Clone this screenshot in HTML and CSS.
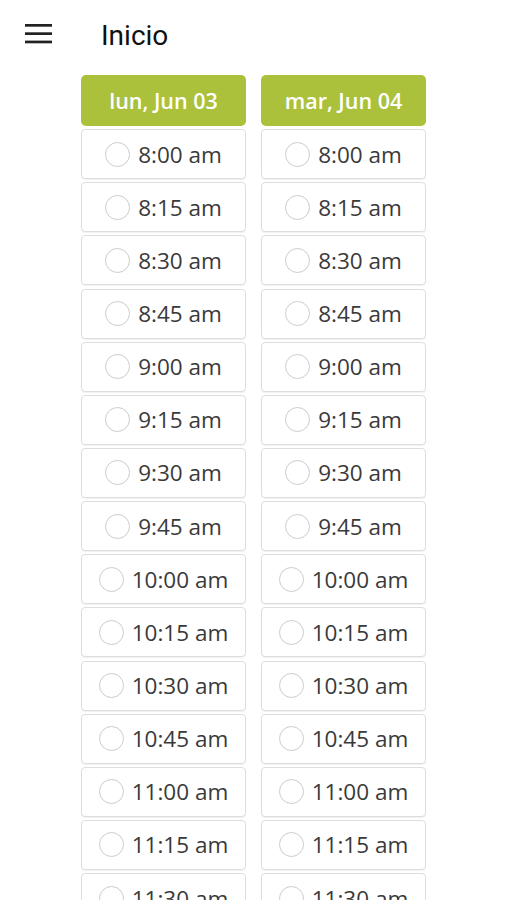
FILE: index.html
```html
<!DOCTYPE html>
<html lang="es">
<head>
    <meta charset="UTF-8">
    <meta name="viewport" content="width=device-width, initial-scale=1.0">
    <title>Inicio</title>
    <link rel="stylesheet" href="styles.css">
</head>
<body>
    <div class="toolbar">
        <svg class="menu-icon" width="27" height="20" viewBox="0 0 27 20">
            <rect x="0" y="0" width="27" height="2.7" fill="#222"/>
            <rect x="0" y="8.3" width="27" height="2.7" fill="#222"/>
            <rect x="0" y="16.6" width="27" height="2.7" fill="#222"/>
        </svg>
        <h1 class="title">Inicio</h1>
    </div>

    <div class="days">
        <div class="day" data-label="lun, Jun 03"></div>
        <div class="day" data-label="mar, Jun 04"></div>
    </div>

    <script>
        const times = ["8:00", "8:15", "8:30", "8:45", "9:00", "9:15", "9:30", "9:45",
            "10:00", "10:15", "10:30", "10:45", "11:00", "11:15", "11:30"];

        document.querySelectorAll(".day").forEach(day => {
            const head = document.createElement("div");
            head.className = "day-head";
            head.textContent = day.dataset.label;
            day.appendChild(head);

            times.forEach(time => {
                const slot = document.createElement("div");
                slot.className = "slot";
                slot.innerHTML = `<span class="radio"></span><span class="time">${time} am</span>`;
                day.appendChild(slot);
            });
        });
    </script>
</body>
</html>
```

FILE: styles.css
```css
body {
    margin: 0;
    background: #fff;
    font-family: "Open Sans", sans-serif;
    overflow: hidden;
}
.toolbar {
    display: flex;
    align-items: flex-start;
    height: 75px;
}
.menu-icon {
    margin: 24px 0 0 25px;
}
.title {
    margin: 20px 0 0 49px;
    font-family: Roboto, sans-serif;
    font-size: 28px;
    line-height: 32px;
    font-weight: 400;
    color: #111;
}
.days {
    display: flex;
    gap: 15px;
    padding-left: 81px;
}
.day {
    width: 165px;
    display: flex;
    flex-direction: column;
    gap: 3.15px;
}
.day-head {
    height: 51px;
    background: #abc13c;
    border-radius: 5px;
    color: #fff;
    font-weight: 600;
    font-size: 21.5px;
    display: flex;
    align-items: center;
    justify-content: center;
}
.slot {
    box-sizing: border-box;
    height: 50px;
    border: 1px solid #ddd;
    border-radius: 4px;
    box-shadow: 0 1px 1px rgba(0, 0, 0, 0.06);
    display: flex;
    align-items: center;
    justify-content: center;
    gap: 8px;
}
.radio {
    box-sizing: border-box;
    width: 25px;
    height: 25px;
    border: 1.5px solid #ccc;
    border-radius: 50%;
}
.time {
    font-size: 22.5px;
    color: #3a3a3a;
}
```
